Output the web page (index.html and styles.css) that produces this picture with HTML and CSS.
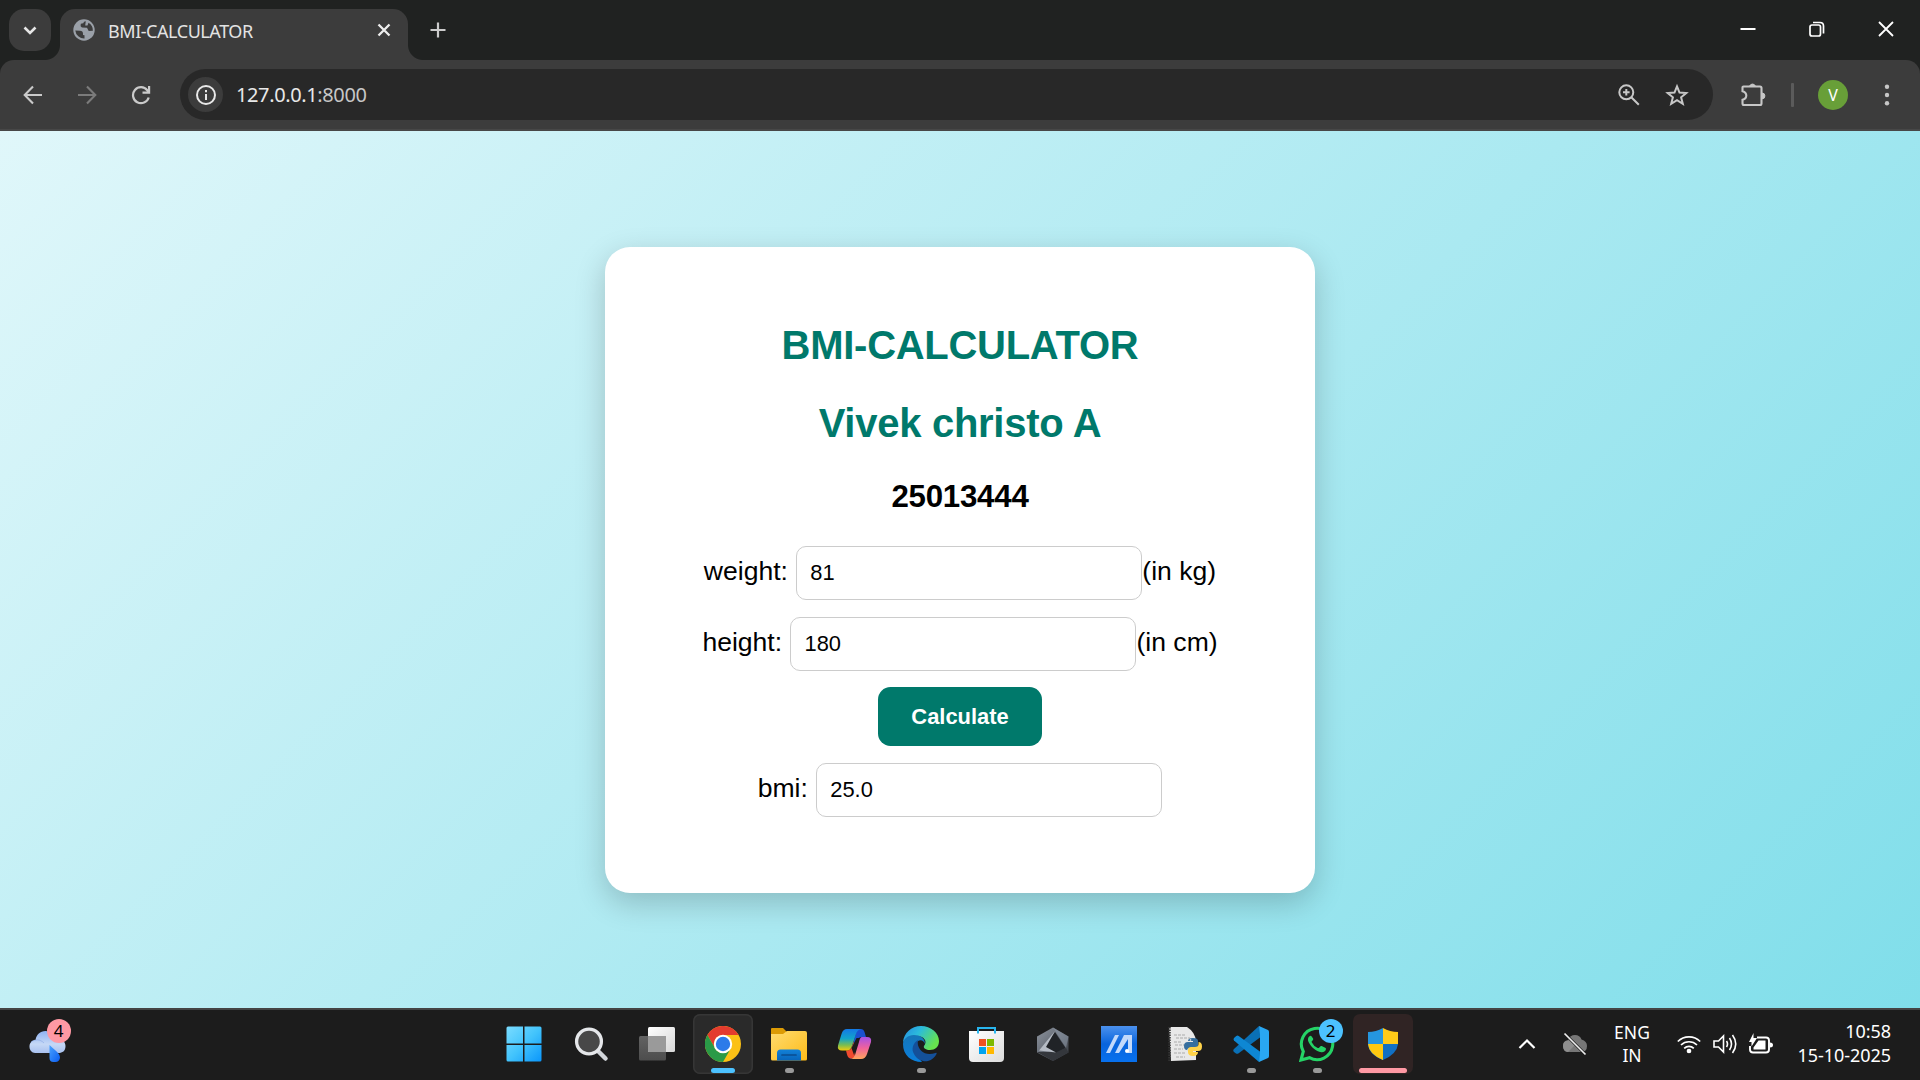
FILE: index.html
```html
<!DOCTYPE html>
<html lang="en">
<head>
<meta charset="utf-8">
<title>BMI-CALCULATOR</title>
<link rel="stylesheet" href="styles.css">
</head>
<body>
<div class="screen">
  <header class="tabstrip">
    <div class="tab-search"><svg width="42" height="42" viewBox="0 0 42 42"><path d="M15.500 18.500l5.500 5.500 5.500-5.500" fill="none" stroke="#e6e6e6" stroke-width="2.600"/></svg></div>
    <div class="tab">
      <svg width="22" height="22" viewBox="0 0 22 22"><circle cx="11" cy="11" r="10.700" fill="#9aa0a8"/><path d="M2.300 11.500L7 11.800q3 .2 3 3v1.200l1.500 .3v3.300A9 9 0 0 1 2.300 11.500zM12.800 2.300q-2.300 .2-2.500 2l-2.500 .5-.2 2.500 1.400 1.200 5 .2 1.700 3.300 4.200-.2A9 9 0 0 0 15.500 3.700l-1 2.800h-2.300z" fill="#3c3c3c"/></svg>
      <span class="tab-title">BMI-CALCULATOR</span>
      <svg class="tab-close" width="16" height="16" viewBox="0 0 16 16"><path d="M2.500 2.500l11 11m0-11l-11 11" stroke="#eee" stroke-width="2.300"/></svg>
    </div>
    <svg class="new-tab" width="18" height="18" viewBox="0 0 18 18"><path d="M9 1.500v15M1.500 9h15" stroke="#ccc" stroke-width="2.200"/></svg>
    <div class="window-controls">
      <svg width="16" height="16" viewBox="0 0 16 16"><path d="M.5 8h15" stroke="#fff" stroke-width="2"/></svg>
      <svg width="16" height="16" viewBox="0 0 16 16" fill="none" stroke="#fff" stroke-width="1.700"><rect x="1" y="4" width="10.500" height="11" rx="2"/><path d="M4 1.500h7q3.500 0 3.500 3.500v7.500"/></svg>
      <svg width="16" height="16" viewBox="0 0 16 16"><path d="M1 1l14 14M15 1L1 15" stroke="#fff" stroke-width="1.800"/></svg>
    </div>
  </header>

  <div class="toolbar-back">
  <nav class="toolbar">
    <div class="nav-icons">
      <svg width="20" height="20" viewBox="0 0 20 20" fill="none" stroke="#cacaca" stroke-width="2.100"><path d="M19 10H2M10 1.500L1.700 10l8.300 8.500"/></svg>
      <svg width="20" height="20" viewBox="0 0 20 20" fill="none" stroke="#7b7b7b" stroke-width="2.100"><path d="M1 10h17M10 1.500l8.300 8.500-8.300 8.500"/></svg>
      <svg width="20" height="20" viewBox="0 0 20 20" fill="none" stroke="#cacaca" stroke-width="2.200"><path d="M17.700 12.500A8 8 0 1 1 16.300 5.200l1.700 2.100M18.100 1v6.600h-6.600"/></svg>
    </div>
    <div class="omnibox">
      <span class="site-info"><svg width="20" height="20" viewBox="0 0 20 20"><circle cx="10" cy="10" r="9" fill="none" stroke="#e8e8e8" stroke-width="2"/><path d="M10 9v6M10 5v2.300" stroke="#e8e8e8" stroke-width="2"/></svg></span>
      <span class="url">127.0.0.1<span class="port">:8000</span></span>
      <svg class="magnify" width="22" height="22" viewBox="0 0 22 22" fill="none" stroke="#c7c7c7" stroke-width="2"><circle cx="8.300" cy="8.300" r="7"/><path d="M13.300 13.300l7.500 7.500M8.300 5v6.600M5 8.300h6.600"/></svg>
      <svg class="star" width="24" height="24" viewBox="0 0 24 24" fill="none" stroke="#c7c7c7" stroke-width="2"><path d="M12 3.300l2.500 6.200 6.800.5-5.200 4.300 1.700 6.500-5.800-3.600-5.800 3.600 1.700-6.500L2.700 10l6.800-.5z"/></svg>
    </div>
    <svg class="puzzle" width="26" height="26" viewBox="0 0 26 26"><path d="M3.500 4.500h16.500q1.500 0 1.500 1.500v15.500q0 1.500-1.500 1.500H4q-1.500 0-1.500-1.500v-3.700q3.800-1 3.800-4.300t-3.800-4.300V5.500q0-1 1-1z" fill="none" stroke="#c7c7c7" stroke-width="2.100"/><path d="M9.700 4a3 3 0 0 1 5.600 0zM22 11a2.900 2.900 0 0 1 0 5.800z" fill="#c7c7c7" stroke="#c7c7c7"/></svg>
    <span class="divider"></span>
    <span class="avatar">V</span>
    <svg class="menu" width="6" height="24" viewBox="0 0 6 24" fill="#c7c7c7"><circle cx="3" cy="3.800" r="2.200"/><circle cx="3" cy="12" r="2.200"/><circle cx="3" cy="20.300" r="2.200"/></svg>
  </nav>
  </div>

  <main class="page">
    <form class="card">
      <h1>BMI-CALCULATOR</h1>
      <h1>Vivek christo A</h1>
      <h2>25013444</h2>
      <div class="row"><label for="weight">weight: </label><input id="weight" value="81"><span>(in kg)</span></div>
      <div class="row"><label for="height">height: </label><input id="height" value="180"><span>(in cm)</span></div>
      <button type="button">Calculate</button>
      <div class="row"><label for="bmi">bmi: </label><input id="bmi" value="25.0"></div>
    </form>
  </main>

  <footer class="taskbar">
    <div class="weather">
      <svg width="38" height="34" viewBox="0 0 38 34"><defs><linearGradient id="cl" x1="0" y1="0" x2="0" y2="1"><stop offset="0" stop-color="#8fb2f2"/><stop offset=".6" stop-color="#c5d8f6"/><stop offset="1" stop-color="#a9c1ef"/></linearGradient><linearGradient id="dr" x1="0" y1="0" x2="1" y2="1"><stop offset="0" stop-color="#4aa3ff"/><stop offset="1" stop-color="#0a5cf0"/></linearGradient></defs><path d="M6 24a6 6 0 0 1-5.500-6.500c0-4 3-6.500 6-6.500C7.500 5.500 11 2 16.500 2c5 0 8 3 9.500 7 6 0 10.500 3 10.500 8s-3 7-7 7z" fill="url(#cl)"/><path d="M2 13c4-3 9-3 13 1" stroke="#8aa9e4" fill="none" opacity=".6"/><path d="M20.500 16c5 5 10.500 8 10.500 12.500a4.500 4.500 0 0 1-4.500 4.500h-2a4 4 0 0 1-4-4z" fill="url(#dr)"/></svg>
      <span class="badge badge-pink">4</span>
    </div>

    <div class="apps">
      <div class="app app-start"><svg width="36" height="36" viewBox="0 0 36 36"><defs><linearGradient id="win" x1="0" y1="0" x2="1" y2="1"><stop offset="0" stop-color="#7adcff"/><stop offset=".5" stop-color="#43c4fc"/><stop offset="1" stop-color="#0a96fb"/></linearGradient></defs><path d="M2 .5h15v17H.5V2Q.5 .5 2 .5zM18.500 .5H34q1.500 0 1.500 1.500v15.500h-17zM.5 19H17v16.500H2Q.5 35.500 .5 34zM18.500 19h17v15q0 1.500-1.500 1.500H18.500z" fill="url(#win)"/></svg></div>
      <div class="app"><svg width="36" height="36" viewBox="0 0 36 36"><path d="M24.500 24.500l8 8" stroke="#d2d5da" stroke-width="4.500" stroke-linecap="round"/><circle cx="16" cy="15.500" r="12.400" fill="#484848" stroke="#e5e7ea" stroke-width="3.300"/></svg></div>
      <div class="app"><svg width="36" height="36" viewBox="0 0 36 36"><defs><linearGradient id="tv" x2="1" y2="1"><stop stop-color="#fff"/><stop offset="1" stop-color="#d7d7d7"/></linearGradient><linearGradient id="tv2" x2="0" y2="1"><stop stop-color="#626262"/><stop offset="1" stop-color="#4d4d4d"/></linearGradient></defs><rect y="10" width="27" height="24.500" rx="1.500" fill="url(#tv2)"/><rect x="9" y="1" width="27" height="25" rx="1.500" fill="url(#tv)"/><path d="M9 10h18v16H10q-1 0-1-1z" fill="#9a9a9a"/></svg></div>
      <div class="app app-active"><svg width="36" height="36" viewBox="0 0 36 36"><circle cx="18" cy="18" r="18" fill="#fbc116"/><path d="M2.400 9A18 18 0 0 1 33.600 9H18a9 9 0 0 0-7.800 13.500z" fill="#e33b2e"/><path d="M2.400 9A18 18 0 0 0 18 36l7.800-13.500A9 9 0 0 1 10.200 22.500z" fill="#2a9a47"/><circle cx="18" cy="18" r="9.200" fill="#fff"/><circle cx="18" cy="18" r="7.200" fill="#2c7be9"/></svg><i class="mark mark-blue"></i></div>
      <div class="app"><svg width="36" height="36" viewBox="0 0 36 36"><defs><linearGradient id="fo" x2="1" y2="1"><stop stop-color="#ffdc70"/><stop offset="1" stop-color="#fdbb18"/></linearGradient><linearGradient id="fb" x2="0" y2="1"><stop stop-color="#1281d8"/><stop offset="1" stop-color="#0865bb"/></linearGradient></defs><path d="M0 3q0-1 1-1H12l4 4v4H0z" fill="#dc9b05"/><path d="M0 8h12l4-3h18q2 0 2 2v26q0 1.500-1.500 1.500h-33Q0 34.500 0 33z" fill="url(#fo)"/><path d="M6 34.500V27q0-3.500 3.500-3.500h17q3.500 0 3.500 3.500v7.500z" fill="url(#fb)"/><path d="M11 29h14" stroke="#0a4c90" stroke-width="1.700" stroke-linecap="round"/></svg><i class="mark"></i></div>
      <div class="app"><svg width="36" height="36" viewBox="0 0 36 36"><defs><linearGradient id="c1" x2="0" y2="1"><stop stop-color="#1479e6"/><stop offset=".45" stop-color="#12a5c9"/><stop offset=".75" stop-color="#7bbd50"/><stop offset="1" stop-color="#f5cc0a"/></linearGradient><linearGradient id="c2" x2="0" y2="1"><stop stop-color="#a650e8"/><stop offset=".5" stop-color="#f0629c"/><stop offset="1" stop-color="#ffa45c"/></linearGradient></defs><path d="M20 3h4q2.500 0 3.500 3l1.500 5h-4q-4 0-5 4l-4 13q-1.500 5-4 5h4q-4 0-3-4z" fill="#1b50d0"/><path d="M9 24.500h1q4 0 5-4l2-5 1 17h-4q-3 0-4-4z" fill="#ef4a2f"/><path d="M14.500 22l5-10h3L17 29z" fill="#1c1c1c"/><path d="M10 3h14q-4 1-5 5l-4 12q-1.500 4.500-5 4.500H5q-5 0-4-5L4.500 8Q6 3 10 3z" fill="url(#c1)"/><path d="M25 11h5q5 0 4 5l-4 12q-1.500 5-6 5H14q3-1 4-4l4-13q1-5 3-5z" fill="url(#c2)"/></svg></div>
      <div class="app"><svg width="36" height="36" viewBox="0 0 36 36"><defs><linearGradient id="e1" x2="1" y2=".5"><stop stop-color="#2588e2"/><stop offset=".45" stop-color="#2bbbdc"/><stop offset="1" stop-color="#66e34e"/></linearGradient><linearGradient id="e2" x2="0" y2="1"><stop stop-color="#1675b7"/><stop offset="1" stop-color="#0a7fdc"/></linearGradient></defs><path d="M0 16C1 7 8 0 18 0s18 7 18 15c0 6-4 9-9 9-4 0-7-2-6-4 4-5 0-10-8-10Q5 10 0 16z" fill="url(#e1)"/><path d="M0 18c0-5 5-9 11-9 6 0 11 3 11 9-1-3-4-5-7-3-4 2-3 13 4 21C8 36 0 29 0 18z" fill="url(#e2)"/><path d="M15 14c-5 3-7 9-4 14 3 6 9 8 14 7 4-1 7-4 8.500-7 .5-1-.3-1.500-1-1-6 2-11 1-14-2-4-4-4-8-3.500-11z" fill="#14509a"/></svg><i class="mark"></i></div>
      <div class="app"><svg width="36" height="36" viewBox="0 0 36 36"><defs><linearGradient id="st" x2="1" y2="1"><stop stop-color="#fff"/><stop offset="1" stop-color="#dcdcdc"/></linearGradient></defs><path d="M0 5h35v27q0 4-4 4h-27q-4 0-4-4z" fill="url(#st)"/><path d="M9 7.500V2h17v5.500" fill="none" stroke="#28b5ee" stroke-width="2"/><path d="M10 13h7v7h-7z" fill="#f05022"/><path d="M18 13h7v7h-7z" fill="#7db900"/><path d="M10 21h7v7h-7z" fill="#00a3ee"/><path d="M18 21h7v7h-7z" fill="#ffb800"/></svg></div>
      <div class="app"><svg width="36" height="36" viewBox="0 0 36 36"><defs><linearGradient id="hx" x2="1" y2="1"><stop stop-color="#8d949e"/><stop offset=".5" stop-color="#656b75"/><stop offset="1" stop-color="#313439"/></linearGradient></defs><path d="M18 1.500l15.500 9v16L18 35 2 26.500v-16z" fill="url(#hx)"/><path d="M18 1.500L33.500 10.500 31 22z" fill="#8c98a6" opacity=".55"/><path d="M2 26h19l10-4 2.500 4.500L18 35z" fill="#34373c"/><path d="M20 6l10.500 16-9.500 4.500L7 24z" fill="#202327"/><path d="M20 5l-9 16 10 5.500L4 24.500z" fill="#b5bbc4"/></svg></div>
      <div class="app"><svg width="36" height="36" viewBox="0 0 36 36"><defs><linearGradient id="ma" x2="0" y2="1"><stop stop-color="#4b91ed"/><stop offset=".5" stop-color="#0864dd"/><stop offset="1" stop-color="#0871ee"/></linearGradient></defs><path d="M0 0h36v36H0z" fill="url(#ma)"/><path d="M5 27L14 9h4L9 27zM14 27l9-18h8v18h-4V13L18 27z" fill="#c2d9fb"/><circle cx="26" cy="25" r="2" fill="#fff"/></svg></div>
      <div class="app"><svg width="36" height="36" viewBox="0 0 36 36"><path d="M2 1h18q8 5 9 14v19L4 35z" fill="#e8e8e8"/><path d="M2.500 1v34" stroke="#333" stroke-width="2.500" stroke-dasharray="1.500 1"/><path d="M7 9h11M9 12h14M7 16h8M8 19h10M7 23h9M7 27h12M9 31h9" stroke="#aaa" stroke-dasharray="3 1"/><path d="M20 24q-3 0-3-4t4-4h5v-1h-5q0-3 5-3t5 3v4q0 3-3 3h-5q-3 0-3 3z" fill="#366f9f"/><path d="M31.500 16q3.500 0 3.500 4.500t-4 4.500h-5v1h5q0 4-5 4t-5-4v-2q0-3 3-3h4q3.500 0 3.500-3z" fill="#ffd34a"/><circle cx="23.500" cy="14" r=".8" fill="#fff"/></svg></div>
      <div class="app"><svg width="36" height="36" viewBox="0 0 36 36"><path d="M26 0L1 23q-1.500 1.500 0 3l2 1.500q1 .7 2.300 0L29 10z" fill="#0a70b6"/><path d="M1 12l2.300-2q1.200-.8 2.400 0L29 27l-3 9L1 14.500q-1-1.200 0-2.500z" fill="#0e87d3"/><path d="M26 0l9 4q1 .5 1 2v24q0 1.500-1 2l-9 4 1-8.500v-19z" fill="#29a7f2"/></svg><i class="mark"></i></div>
      <div class="app"><svg width="36" height="36" viewBox="0 0 36 36"><path d="M2 34l2.300-8.500A15.700 15.700 0 1 1 10.500 31.700z" fill="none" stroke="#25d366" stroke-width="3.100"/><path d="M12.500 10.200q-.7-.8-1.700-.2c-2.300 1.500-2.300 4-1 6.500 2.700 5 7 8.700 12.500 9.800 2.400.3 4.700-1.300 4.700-3.500q0-.7-.8-1.100l-3.500-1.700q-1-.4-1.600.5l-1 1.300q-.6.5-1.400.1-4.300-1.900-6-5.600-.2-.7.3-1.200l1-1.200q.4-.6.1-1.300z" fill="#25d366"/></svg><span class="badge badge-blue">2</span><i class="mark"></i></div>
      <div class="app app-alert"><svg width="36" height="36" viewBox="0 0 36 36"><path d="M18 2Q11 6 3 6v11q0 11 15 17z" fill="#2596df"/><path d="M18 2q7 4 15 4v12H18z" fill="#ffca18"/><path d="M3 18h15v16Q4 28 3 18z" fill="#ffc90f"/><path d="M18 18h15q-1 10-15 16z" fill="#1170c4"/></svg><i class="mark mark-pink"></i></div>
    </div>

    <div class="tray">
      <svg width="18" height="12" viewBox="0 0 18 12"><path d="M1.500 10L9 2.500 16.500 10" fill="none" stroke="#fff" stroke-width="2.200"/></svg>
      <svg class="cloud" width="26" height="24" viewBox="0 0 26 24"><path d="M6 20q-5-.5-5-6 0-5 5-6 2-5 7-5 5 0 6.500 4.500Q25 9 25 14q0 6-6 6z" fill="#777"/><path d="M4 9q6-2 10 3l-8 8q-5-.5-5-6 0-4 3-5z" fill="#8e8e8e"/><path d="M2.500 1.500l21 21" stroke="#1c1c1c" stroke-width="3"/><path d="M2.500 1.500l21 21" stroke="#eee" stroke-width="1.700"/></svg>
      <div class="lang">ENG<br>IN</div>
      <svg class="wifi" width="24" height="20" viewBox="0 0 24 20" fill="none" stroke="#fff" stroke-width="1.700"><path d="M.8 7.500a16 16 0 0 1 22.400 0M4 11a11.500 11.500 0 0 1 16 0M7.200 14.300a7 7 0 0 1 9.600 0"/><circle cx="12" cy="17" r="1.500" fill="#fff"/></svg>
      <svg class="sound" width="25" height="22" viewBox="0 0 25 22" fill="none" stroke="#fff" stroke-width="1.600"><path d="M1 8h4.500l5-5v16l-5-5H1zM13.500 8q2 3 0 6M16.500 5q4 6 0 12M19.500 2q6.500 9 0 18"/></svg>
      <svg class="battery" width="26" height="22" viewBox="0 0 26 22"><path d="M9 4.500h9q3 0 3 3v9q0 3-3 3H5q-3 0-3-3V13" fill="none" stroke="#fff" stroke-width="1.900"/><path d="M10.500 7.500H17.500v9H5.500v-2zM22 9.500q3 0 3 2.500t-3 2.500zM5.500 0v5H9L3.500 13.500V9H1z" fill="#fff"/></svg>
      <div class="clock">10:58<br>15-10-2025</div>
    </div>
  </footer>
</div>
</body>
</html>
```
FILE: styles.css
```css
* { box-sizing: border-box; }
body { margin: 0; background: #1c1c1c; overflow: hidden; }
svg { display: block; flex: none; }

.screen {
  width: 1920px;
  height: 1080px;
  display: flex;
  flex-direction: column;
  font-family: "Noto Sans", "Open Sans", sans-serif;
}

/* Tab strip */
.tabstrip { height: 60px; flex: none; display: flex; padding: 9px 26px 0 9px; background: #202221; }
.tab-search { width: 42px; height: 42px; border-radius: 15px; background: #3c3c3c; }
.tab {
  position: relative;
  width: 348px;
  height: 51px;
  margin-left: 9px;
  padding: 0 16px 9px 13px;
  display: flex;
  align-items: center;
  border-radius: 15px 15px 0 0;
  background: #3c3c3c;
}
.tab::before, .tab::after { content: ""; position: absolute; bottom: 0; width: 15px; height: 15px; }
.tab::before { right: 100%; background: radial-gradient(circle at 0 0, transparent 14.5px, #3c3c3c 15.5px); }
.tab::after { left: 100%; background: radial-gradient(circle at 100% 0, transparent 14.5px, #3c3c3c 15.5px); }
.tab-title { margin: 1px 0 0 13px; font-size: 18px; letter-spacing: -0.45px; color: #e3e3e3; }
.tab-close { margin-left: auto; }
.new-tab { margin: 12px 0 0 21px; }
.window-controls { margin: 12px 0 0 auto; display: flex; gap: 53px; }

/* Toolbar */
.toolbar-back { height: 71px; flex: none; background: #202221; }
.toolbar {
  height: 71px;
  display: flex;
  align-items: center;
  padding: 0 30px 0 23px;
  border-bottom: 2px solid #474747;
  border-radius: 14px 14px 0 0;
  background: #3c3c3c;
}
.nav-icons { display: flex; gap: 34px; }
.omnibox {
  width: 1533px;
  height: 51px;
  margin-left: 29px;
  padding: 0 24px 0 8px;
  display: flex;
  align-items: center;
  border-radius: 26px;
  background: #282828;
}
.site-info { width: 35px; height: 35px; display: grid; place-items: center; border-radius: 50%; background: #3c3c3c; }
.url { margin-left: 13px; font-size: 20px; letter-spacing: -0.38px; color: #e8e8e8; }
.port { color: #c7c7c7; }
.magnify { margin-left: auto; }
.star { margin-left: 25px; }
.puzzle { margin-left: 27px; }
.divider { width: 3px; height: 24px; margin-left: 25px; border-radius: 1px; background: #5b5b5b; }
.avatar {
  width: 30px;
  height: 30px;
  margin-left: 24px;
  border-radius: 50%;
  background: #689f38;
  color: #fff;
  font-size: 16px;
  line-height: 31px;
  text-align: center;
}
.menu { margin-left: auto; }

/* Web page */
.page {
  height: 877px;
  flex: none;
  display: flex;
  align-items: center;
  justify-content: center;
  background: linear-gradient(135deg, #e0f7fa, #80deea);
  font-family: "Liberation Sans", Arial, sans-serif;
  color: #000;
}
.card {
  width: 710px;
  height: 646px;
  padding-top: 75px;
  display: flex;
  flex-direction: column;
  align-items: center;
  border-radius: 25px;
  background: #fff;
  box-shadow: 0 10px 31px rgba(0, 0, 0, 0.2);
}
h1 { margin: 0 0 32px; font-size: 40px; line-height: 46px; letter-spacing: -0.28px; color: #00796b; }
h2 { margin: 1px 0 31px; font-size: 31.25px; line-height: 36px; letter-spacing: -0.25px; }
.row { height: 54px; display: flex; align-items: baseline; font-size: 26.56px; margin-bottom: 17px; white-space: pre; }
label { margin-right: 1px; }
input {
  width: 346px;
  height: 54px;
  padding: 0 13px;
  border: 1px solid #ccc;
  border-radius: 10px;
  background: #fff;
  color: #000;
  font: 21.9px "Liberation Sans", Arial, sans-serif;
}
button {
  width: 164px;
  height: 59px;
  margin: -1px 0 17px;
  padding: 2px 0 0;
  border: 0;
  border-radius: 12.5px;
  background: #00796b;
  color: #fff;
  font: bold 21.9px "Liberation Sans", Arial, sans-serif;
}

/* Taskbar */
.taskbar { height: 72px; flex: none; display: flex; border-top: 2px solid #444; background: #1c1c1c; color: #fff; }
.weather { position: relative; width: 495px; padding: 19px 0 0 29px; }
.badge {
  position: absolute;
  width: 24px;
  height: 24px;
  border-radius: 50%;
  color: #000;
  font-size: 17px;
  line-height: 24px;
  text-align: center;
}
.badge-pink { left: 46.5px; top: 8.5px; background: #ff99a4; }
.badge-blue { left: 31.5px; top: 5px; background: #4cc2ff; }
.apps { display: flex; gap: 6px; padding: 4px 0 0; margin-left: -1.5px; margin-right: 1.5px; }
.app { position: relative; width: 60px; height: 60px; padding: 12px; border-radius: 7px; }
.app-start { padding-left: 10.5px; }
.apps { margin: 0; }
.app-active { background: #2a2a2a; box-shadow: inset 0 0 0 1.5px #363636; }
.app-alert { background: #302424; }
.mark { position: absolute; left: 25.5px; bottom: 1px; width: 9px; height: 5px; border-radius: 3px; background: #999; }
.mark-blue { left: 18px; width: 24px; background: #4cc2ff; }
.mark-pink { left: 6px; width: 48px; background: #ff99a4; }

.tray { flex: 1; display: flex; align-items: center; padding: 0 29px 3px 105px; font-size: 17.5px; line-height: 24px; }
.cloud { margin-left: 26px; }
.lang { width: 44px; margin-left: 22px; text-align: center; line-height: 23px; }
.wifi { margin-left: 23px; }
.sound { margin-left: 12px; }
.battery { margin-left: 10px; }
.clock { margin: -1px 0 0 auto; text-align: right; font-size: 18px; letter-spacing: -0.05px; }
```
